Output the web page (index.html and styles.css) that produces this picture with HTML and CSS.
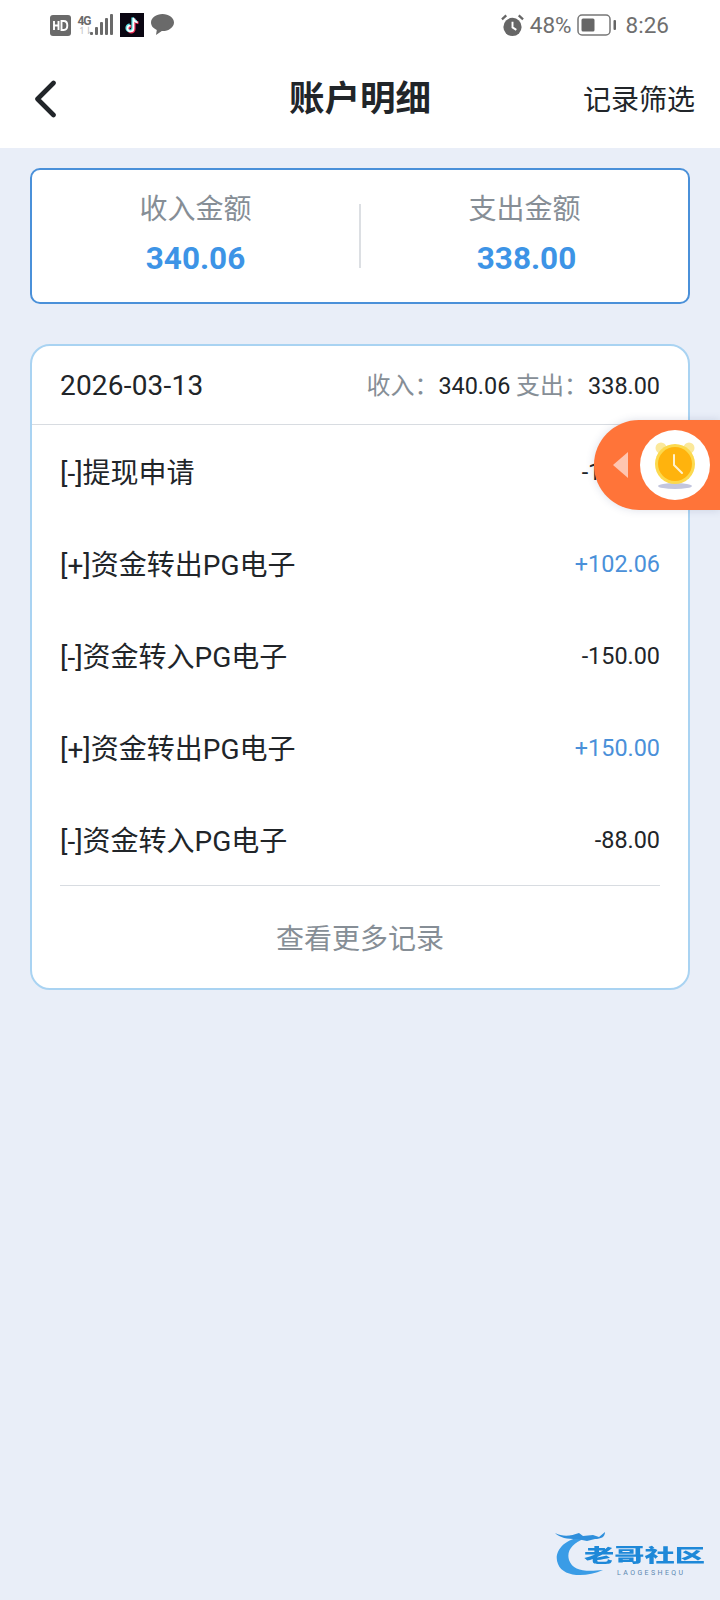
FILE: index.html
```html
<!DOCTYPE html>
<html lang="zh-CN">
<head>
<meta charset="utf-8">
<title>账户明细</title>
<link rel="stylesheet" href="styles.css">
</head>
<body>
<div class="page">
  <div class="top">
    <div class="status">
      <div class="status-left">
        <svg class="hd" width="21" height="21" viewBox="0 0 21 21"><rect width="21" height="21" rx="3" fill="#6a6a6a"/><path d="M4 6v9M4 10.500h4.500M8.500 6v9" stroke="#fff" stroke-width="1.900" fill="none"/><path d="M11.500 6v9h2.200c2.200 0 3.600-1.700 3.600-4.500S15.900 6 13.700 6z" stroke="#fff" stroke-width="1.900" fill="none"/></svg>
        <div class="net">
          <div class="net-text"><span class="net-4g">4G</span><span class="net-arrows">↿⇂</span></div>
          <svg width="23" height="22" viewBox="0 0 23 22"><g fill="#6a6a6a"><rect x="0" y="18" width="3" height="3" rx="1"/><rect x="5" y="13" width="3" height="8" rx="1"/><rect x="10" y="8" width="3" height="13" rx="1"/><rect x="15" y="4" width="3" height="17" rx="1"/><rect x="20" y="0" width="3" height="21" rx="1"/></g></svg>
        </div>
        <svg class="tiktok" width="24" height="24" viewBox="0 0 24 24"><rect width="24" height="24" fill="#0a0612"/><path d="M13.500 5v10.500a3 3 0 1 1-3-3M13.500 5c.3 2.500 1.800 4 4.200 4.300" stroke="#ef2d55" stroke-width="2.600" fill="none" transform="translate(.8 .6)"/><path d="M13.500 5v10.500a3 3 0 1 1-3-3M13.500 5c.3 2.500 1.800 4 4.200 4.300" stroke="#5fe3ea" stroke-width="2.600" fill="none" transform="translate(-.8 -.6)"/><path d="M13.500 5v10.500a3 3 0 1 1-3-3M13.500 5c.3 2.500 1.800 4 4.200 4.300" stroke="#fff" stroke-width="1.700" fill="none"/></svg>
        <svg width="23" height="22" viewBox="0 0 23 22"><path d="M11.500 0C5.200 0 0 3.800 0 8.500c0 3.300 2.400 6 5.800 7.400L5 21l5.800-3.900h.7c6.300 0 11.500-3.800 11.500-8.600S17.800 0 11.500 0z" fill="#6a6a6a"/></svg>
      </div>
      <div class="status-right">
        <svg width="23" height="23" viewBox="0 0 24 24"><circle cx="12" cy="13.500" r="9.500" fill="#666"/><path d="M12 8v6l4 2.500" stroke="#fff" stroke-width="2" fill="none"/><path d="M1 5.500 5.500 1.500M23 5.500 18.500 1.500" stroke="#666" stroke-width="2.400" fill="none"/></svg>
        <span class="pct">48%</span>
        <svg class="batt" width="40" height="22" viewBox="0 0 40 22"><rect x="1" y="1" width="32" height="20" rx="4" fill="none" stroke="#777" stroke-width="1.500"/><rect x="4.500" y="4.500" width="13" height="13" rx="1.500" fill="#666"/><rect x="36.500" y="6" width="2.500" height="10" rx="1" fill="#666"/></svg>
        <span class="time">8:26</span>
      </div>
    </div>
    <header class="nav">
      <svg class="back" width="23" height="38" viewBox="0 0 23 38"><path d="M19.500 3 3.500 19 19.500 35" stroke="#212529" stroke-width="4.600" stroke-linecap="round" stroke-linejoin="round" fill="none"/></svg>
      <h1 class="title">账户明细</h1>
      <span class="filter">记录筛选</span>
    </header>
  </div>

  <main class="content">
    <section class="summary">
      <div class="sum-col">
        <div class="sum-label">收入金额</div>
        <div class="sum-value">340.06</div>
      </div>
      <div class="sum-sep"></div>
      <div class="sum-col">
        <div class="sum-label">支出金额</div>
        <div class="sum-value sum-value-out">338.00</div>
      </div>
    </section>

    <section class="records">
      <div class="rec-head">
        <span class="rec-date">2026-03-13</span>
        <span class="rec-total"><span class="muted">收入：</span>340.06 <span class="muted">支出：</span>338.00</span>
      </div>
      <ul class="rec-list">
        <li class="rec-row"><span class="rec-name">[-]提现申请</span><span class="rec-amt">-100.00</span></li>
        <li class="rec-row"><span class="rec-name">[+]资金转出PG电子</span><span class="rec-amt plus">+102.06</span></li>
        <li class="rec-row"><span class="rec-name">[-]资金转入PG电子</span><span class="rec-amt">-150.00</span></li>
        <li class="rec-row"><span class="rec-name">[+]资金转出PG电子</span><span class="rec-amt plus">+150.00</span></li>
        <li class="rec-row"><span class="rec-name">[-]资金转入PG电子</span><span class="rec-amt">-88.00</span></li>
      </ul>
      <div class="rec-more"><span>查看更多记录</span></div>
    </section>
  </main>

  <div class="float">
    <span class="float-arrow"></span>
    <span class="float-disc">
      <svg class="clock" width="56" height="56" viewBox="0 0 56 56"><circle cx="14" cy="11" r="5.500" fill="#fbe89a"/><circle cx="42" cy="11" r="5.500" fill="#fbe89a"/><ellipse cx="28" cy="49" rx="17" ry="3" fill="#c3c6de"/><circle cx="28" cy="27" r="20" fill="#fcd94e"/><circle cx="28" cy="27" r="17" fill="#ffb30d"/><path d="M27 18v10l8 8" stroke="#fff3cf" stroke-width="2" fill="none" stroke-linecap="round"/></svg>
    </span>
  </div>

  <div class="mark">
    <svg class="mark-dragon" width="54" height="48" viewBox="0 0 54 48"><path d="M27 6C8 8-2 22 3 33c5 13 27 14 45 6-18 2-30 1-34-10-3-10 5-17 14-21z" fill="#3a9ce6"/><path d="M0 2c8 4 16 3 24 0l4 3 10-1 6 2 6-5c0 5-4 7-10 7l-8 2-10-2C12 8 5 7 0 2z" fill="#2f8fdc"/></svg>
    <div class="mark-text">
      <span class="mark-cn">老哥社区</span>
      <span class="mark-en">LAOGESHEQU</span>
    </div>
  </div>
</div>
</body>
</html>
```

FILE: styles.css
```css
* { box-sizing: border-box; }
html, body { margin: 0; padding: 0; }
body {
  width: 720px;
  height: 1600px;
  overflow: hidden;
  background: #e9eef8;
  font-family: Roboto, "Noto Sans CJK SC", sans-serif;
  color: #212529;
}
.page { position: relative; width: 720px; height: 1600px; overflow: hidden; }

.top { background: #fff; height: 148px; }
.status {
  height: 50px;
  display: flex;
  justify-content: space-between;
  align-items: center;
  padding: 0 51px 0 50px;
}
.status-left, .status-right { display: flex; align-items: center; }
.status-left { gap: 7px; }
.status-right { color: #6f6f6f; font-size: 22.500px; }
.net { display: flex; align-items: flex-end; }
.net-text { width: 12px; display: flex; flex-direction: column; align-items: center; line-height: 10px; }
.net-4g { font-size: 12px; font-weight: 700; letter-spacing: -1px; color: #6a6a6a; }
.net-arrows { font-size: 10px; color: #c4c4c4; font-family: "DejaVu Sans", sans-serif; letter-spacing: -2px; }
.pct { margin-left: 6px; }
.batt { margin-left: 5px; }
.time { margin-left: 9px; }

.nav {
  height: 98px;
  display: grid;
  grid-template-columns: 1fr auto 1fr;
  align-items: center;
  padding: 0 25px;
}
.back { justify-self: start; margin-left: 9px; }
.title { margin: 2px 0 0; font-size: 35.500px; font-weight: 700; line-height: 1; color: #212529; }
.filter { justify-self: end; margin-top: 3px; font-size: 28px; line-height: 1; color: #212529; }

.content { padding: 20px 30px 0; display: flex; flex-direction: column; gap: 40px; }

.summary {
  height: 136px;
  background: #fff;
  border: 2px solid #4a90d9;
  border-radius: 10px;
  display: flex;
  align-items: center;
}
.sum-col { flex: 1; text-align: center; padding-bottom: 4px; }
.sum-label { margin-top: 1px; font-size: 28px; line-height: 36px; color: #868e96; }
.sum-value { margin-top: 12px; font-size: 31.500px; line-height: 38px; font-weight: 700; color: #3d94e6; }
.sum-value-out { padding-left: 4px; }
.sum-sep { width: 2px; height: 64px; background: #dcdfe3; }

.records {
  height: 646px;
  background: #fff;
  border: 2px solid #a9d3f2;
  border-radius: 20px;
  display: flex;
  flex-direction: column;
}
.rec-head {
  height: 79px;
  flex: none;
  display: flex;
  justify-content: space-between;
  align-items: center;
  padding: 0 28px;
  border-bottom: 1px solid #d8dce1;
}
.rec-date { font-size: 28px; letter-spacing: .2px; color: #212529; }
.rec-total { font-size: 23.400px; margin-bottom: 3px; color: #212529; }
.muted { font-size: 24px; color: #868e96; }
.rec-list { list-style: none; margin: 0; padding: 0 28px; }
.rec-row {
  height: 92px;
  display: flex;
  justify-content: space-between;
  align-items: center;
}
.rec-name { font-size: 28px; color: #212529; }
.rec-amt { font-size: 23.400px; padding-top: 2px; color: #212529; }
.rec-amt.plus { color: #4a90d9; }
.rec-more {
  margin: 0 28px;
  flex: 1;
  border-top: 1px solid #d8dce1;
  display: flex;
  align-items: center;
  justify-content: center;
  font-size: 28px;
  color: #868e96;
}

.float {
  position: absolute;
  top: 420px;
  right: 0;
  width: 126px;
  height: 90px;
  background: #ff7439;
  border-radius: 45px 0 0 45px;
  display: flex;
  align-items: center;
  box-shadow: 0 0 8px rgba(60, 80, 130, .18);
  padding-left: 19px;
}
.float-arrow {
  width: 15px;
  height: 26px;
  background: #ffc5b0;
  clip-path: polygon(100% 0, 100% 100%, 0 50%);
}
.float-disc {
  margin-left: 12px;
  width: 70px;
  height: 70px;
  flex: none;
  border-radius: 50%;
  background: #fff;
  display: flex;
  align-items: center;
  justify-content: center;
}
.clock { filter: blur(.5px); }

.mark {
  position: absolute;
  left: 555px;
  top: 1531px;
  width: 160px;
  height: 60px;
}
.mark-dragon { position: absolute; left: 0; top: 0; filter: blur(.4px); }
.mark-text {
  position: absolute;
  left: 29px;
  top: 15px;
  display: flex;
  flex-direction: column;
  align-items: flex-start;
}
.mark-cn {
  display: block;
  height: 20px;
  font-size: 28px;
  line-height: 20px;
  font-weight: 900;
  color: #1e88d8;
  white-space: nowrap;
  transform: scale(1.08, .65);
  transform-origin: left center;
  filter: blur(.3px);
}
.mark-en {
  margin: 2px 0 0 33px;
  font-size: 7px;
  line-height: 10px;
  letter-spacing: 2.400px;
  color: #5a87b0;
}
```
